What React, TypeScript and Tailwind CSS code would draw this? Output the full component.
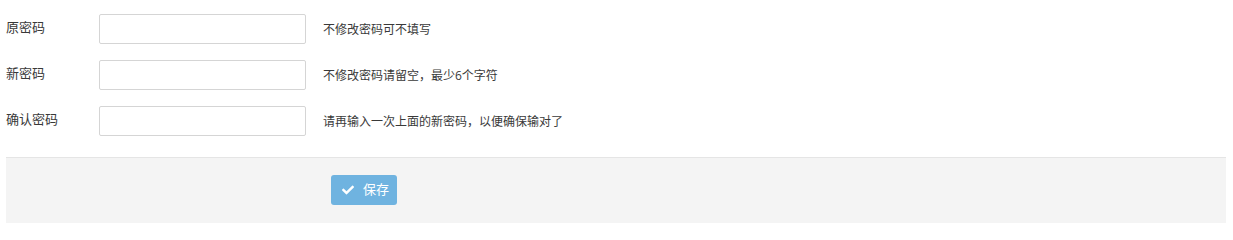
import { FaCheck } from "react-icons/fa";

const rows = [
  { label: "原密码", hint: "不修改密码可不填写" },
  { label: "新密码", hint: "不修改密码请留空，最少6个字符" },
  { label: "确认密码", hint: "请再输入一次上面的新密码，以便确保输对了" },
];

export default function App() {
  return (
    <div
      className="bg-white pl-[6px] pr-[7px] pt-[14px] pb-[6px] text-[#393939]"
      style={{ fontFamily: '"Open Sans", "Noto Sans CJK SC", sans-serif' }}
    >
      <div className="flex flex-col gap-4">
        {rows.map((row) => (
          <div key={row.label} className="flex items-center h-[30px]">
            <label className="w-[93px] text-[13px] leading-none pb-[3px]">
              {row.label}
            </label>
            <input
              type="password"
              className="w-[207px] h-[30px] border border-[#d5d5d5] rounded-[2px] px-2 text-[13px] outline-none"
            />
            <span className="ml-[17px] text-[12px] leading-none pt-[2px]">
              {row.hint}
            </span>
          </div>
        ))}
      </div>

      {/* Form actions */}
      <div className="mt-[21px] h-[66px] border-t border-[#e5e5e5] bg-[#f4f4f4] pt-[17px] pl-[325px]">
        <button className="flex items-center h-[30px] w-[66px] rounded-[3px] bg-[#6fb3e0] pl-[11px] text-[13px] text-white">
          <FaCheck className="w-[12px] h-[12px]" />
          <span className="ml-[9px]">保存</span>
        </button>
      </div>
    </div>
  );
}
